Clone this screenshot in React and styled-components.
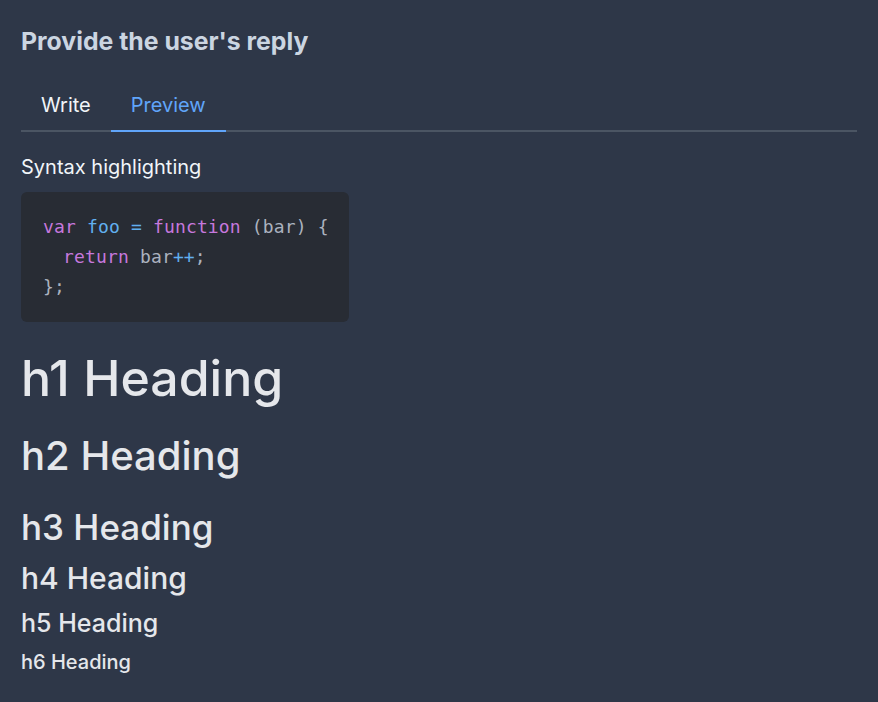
import React from 'react';
import styled, {createGlobalStyle} from 'styled-components';

const GlobalStyle = createGlobalStyle`
  html, body {
    margin: 0;
    padding: 0;
    background: #2e3748;
  }
  body {
    font-family: Inter, "Noto Sans", sans-serif;
    color: #f1f5f9;
  }
`;

const Page = styled.div`
  padding: 25px 21px 20px 21px;
  min-height: 702px;
  box-sizing: border-box;
`;

const Title = styled.h2`
  margin: 0 0 24px 0;
  font-size: 24.8px;
  font-weight: 700;
  color: #cbd5e1;
  line-height: 32px;
`;

const Tabs = styled.div`
  display: flex;
  border-bottom: 2px solid #4b5563;
`;

const Tab = styled.button`
  background: none;
  border: none;
  font-family: inherit;
  font-size: 20px;
  padding: 10px 20px 11px 20px;
  margin-bottom: -2px;
  cursor: pointer;
  line-height: 28px;
  color: ${p => (p.active ? '#60a5fa' : '#f1f5f9')};
  border-bottom: 2px solid ${p => (p.active ? '#60a5fa' : 'transparent')};
`;

const Content = styled.div`
  padding-top: 21px;
`;

const Para = styled.p`
  margin: 0 0 11px 0;
  font-size: 20px;
  line-height: 28px;
`;

const CodeBlock = styled.pre`
  margin: 0;
  display: inline-block;
  background: #282c34;
  border-radius: 6px;
  padding: 20px 20px 20px 22px;
  font-family: "DejaVu Sans Mono", monospace;
  font-size: 18px;
  letter-spacing: 0.15px;
  line-height: 30px;
  color: #abb2bf;
`;

const Indent = styled.span`
  display: inline-block;
  width: 20px;
`;

const Kw = styled.span`
  color: #c678dd;
`;

const Fn = styled.span`
  color: #61afef;
`;

// size, line-height, margin-top
const levels = {
    1: [50, 60, 26],
    2: [40, 48, 24],
    3: [35, 42, 26],
    4: [30, 36, 12],
    5: [25, 30, 12],
    6: [20, 24, 12],
};

const Heading = styled.div`
  font-size: ${p => levels[p.level][0]}px;
  line-height: ${p => levels[p.level][1]}px;
  margin-top: ${p => levels[p.level][2]}px;
  font-weight: 500;
  color: #e5e7eb;
`;

export default function App() {
    return (
        <Page>
            <GlobalStyle/>
            <Title>Provide the user's reply</Title>
            <Tabs>
                <Tab>Write</Tab>
                <Tab active>Preview</Tab>
            </Tabs>
            <Content>
                <Para>Syntax highlighting</Para>
                <CodeBlock>
                    <Kw>var</Kw> <Fn>foo</Fn> <Fn>=</Fn> <Kw>function</Kw> (bar) {'{'}{'\n'}
                    <Indent/><Kw>return</Kw> bar<Fn>++</Fn>;{'\n'}
                    {'};'}
                </CodeBlock>
                {[1, 2, 3, 4, 5, 6].map(l => (
                    <Heading key={l} level={l}>h{l} Heading</Heading>
                ))}
            </Content>
        </Page>
    );
}
